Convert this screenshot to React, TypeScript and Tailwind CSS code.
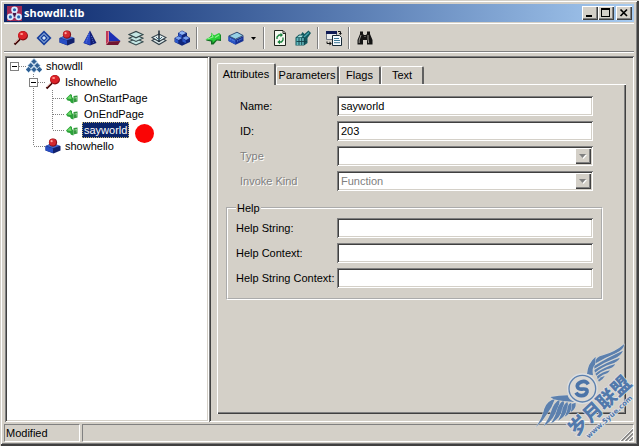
import { ReactNode } from 'react';

const SUNKEN =
  'shadow-[inset_1px_1px_0_#808080,inset_-1px_-1px_0_#ffffff,inset_2px_2px_0_#404040,inset_-2px_-2px_0_#d4d0c8]';
const RAISED =
  'bg-[#d4d0c8] shadow-[inset_1px_1px_0_#ffffff,inset_-1px_-1px_0_#404040,inset_-2px_-2px_0_#808080]';

function Icon({ children, className = 'w-4 h-4' }: { children: ReactNode; className?: string }) {
  return (
    <svg viewBox="0 0 16 16" className={`${className} shrink-0`} aria-hidden="true">
      {children}
    </svg>
  );
}

function PinIcon() {
  return (
    <Icon>
      <path d="M1.5 14.5 L7 9" stroke="#400808" strokeWidth="2.2" />
      <path d="M2 13 L6.5 8.5" stroke="#e0a098" strokeWidth="0.9" />
      <ellipse cx="10" cy="5.8" rx="5" ry="4.7" fill="#8c0d12" />
      <ellipse cx="9.6" cy="5.2" rx="4.4" ry="4" fill="#dc2228" />
      <ellipse cx="8.6" cy="4" rx="1.5" ry="1" fill="#ff9a90" />
    </Icon>
  );
}

function DiamondIcon() {
  return (
    <Icon>
      <path d="M8 0.5 L15.5 8 L8 15.5 L0.5 8 Z" fill="#183f9c" />
      <path d="M8 3 L13 8 L8 13 L3 8 Z" fill="#b5d4f0" />
      <path d="M8 4 L12 8 L8 12 L4 8 Z" fill="#183f9c" />
      <path d="M8 6 L10 8 L8 10 L6 8 Z" fill="#d5e8fa" />
    </Icon>
  );
}

function CoclassIcon() {
  return (
    <Icon>
      <path d="M0.5 8 L5 6 L15.5 8 V12.5 L8.5 15.5 L0.5 12.5 Z" fill="#12226e" />
      <path d="M0.5 8 L8 10.5 V15 L0.5 12.5 Z" fill="#284ec4" />
      <path d="M1 7.7 L8 5 L15 7.7 L8 10.3 Z" fill="#4267cc" />
      <circle cx="8" cy="4.6" r="4.1" fill="#851018" />
      <circle cx="7.6" cy="4.2" r="3.4" fill="#d32a30" />
      <circle cx="6.6" cy="3.2" r="1.1" fill="#ffaaa4" />
    </Icon>
  );
}

function ConeIcon() {
  return (
    <Icon>
      <path d="M8 0.5 L14.5 13 L8 15.5 L1.5 13 Z" fill="#101c74" />
      <path d="M8 1 L8.5 15 L1.5 13 Z" fill="#2947c6" />
      <path d="M7 4 L4 13 M9.5 6 L11.5 13" stroke="#6f8bea" strokeWidth="0.8" strokeDasharray="1 1" />
    </Icon>
  );
}

function WedgeIcon() {
  return (
    <Icon>
      <path d="M1 1 L5 1 L5 11 L1 15 Z" fill="#c03a58" />
      <path d="M4 1 L15.5 11 L4 11.5 Z" fill="#1c2fb4" />
      <path d="M1 15 L4 11.5 L15.5 11 L13 15 Z" fill="#711531" />
      <path d="M3.5 1.5 V11.5 L1 14.5" fill="none" stroke="#f0a0b0" strokeWidth="0.7" />
    </Icon>
  );
}

function LayersIcon() {
  return (
    <Icon>
      {[11.8, 8.2, 4.6].map((y) => (
        <path
          key={y}
          d={`M1 ${y} L8 ${y - 3.2} L15 ${y} L8 ${y + 3.2} Z`}
          fill="#c4e6e3"
          stroke="#34484b"
          strokeWidth="1.1"
        />
      ))}
    </Icon>
  );
}

function ModuleIcon() {
  return (
    <Icon>
      <path d="M1 10.5 L8 7 L15 10.5 L8 14.5 Z" fill="#dceaea" stroke="#33414a" strokeWidth="1.1" />
      <path d="M1 7.5 L8 4 L15 7.5 L8 11.5 Z" fill="#e8f2f2" stroke="#33414a" strokeWidth="1.1" />
      <path d="M8 0.5 V12" stroke="#1c2a36" strokeWidth="1.5" />
      <path d="M5 7 L8 10 L11 7" fill="none" stroke="#406c80" />
    </Icon>
  );
}

function CubesIcon() {
  return (
    <Icon>
      <path d="M8 0.5 L13 3 V6 L16 8 V12 L8 15.8 L0.5 12 V8 L4 6 V3 Z" fill="#10267c" />
      <path d="M8 1 L12 3 L8 5 L4.5 3 Z" fill="#8fb4f4" />
      <path d="M4.5 6.2 L8 8 L4.5 10 L1 8 Z M12 6.2 L15.5 8 L12 10 L8.5 8 Z" fill="#79a1ee" />
      <path d="M4.5 3.5 L7.8 5.3 V7.5 L4.5 6 Z M1 8.6 L4.3 10.5 V13.5 L1 12 Z M8.4 8.6 L11.8 10.5 V13.3 L8.4 11.5 Z" fill="#2c58ca" />
    </Icon>
  );
}

function MethodIcon() {
  return (
    <Icon>
      <path d="M6 3.5 L10 6 L14.5 3.5 L16 5 V11 L12 10.5 L8.5 14.5 L6 14.5 V11.5 L1 10.5 L6 6 Z" fill="#126b22" />
      <path d="M6.5 2.5 L9 5.5 L14 3 L15.3 4.5 V9.5 L11.5 9.5 L7.5 13 V10.5 L0.3 9.5 L6 6.5 Z" fill="#28cf37" />
      <path d="M6.8 4 L8 7 L2.5 9 M10 7.5 L14 5" fill="none" stroke="#8ff08c" strokeWidth="1.1" />
    </Icon>
  );
}

// smaller, softer version used in the tree
function TreeMethodIcon() {
  return (
    <Icon>
      <path d="M2 8.5 L6.5 4 L8 5 V7 L9.5 8.5 V13.5 L7 12.8 L6 11 L3.5 10.5 Z" fill="#2ba139" />
      <path d="M3 8.5 L6.5 5.3 L7.5 9 Z" fill="#6fdc6a" />
      <path d="M9.5 6 L13.5 5.5 V11.5 L9.5 12.5 Z" fill="#35983f" />
      <path d="M10.5 8 L13 7.5 V10.5" fill="none" stroke="#a2dba0" />
    </Icon>
  );
}

function BoxIcon() {
  return (
    <Icon>
      <path d="M0.5 6 L8 9.5 L15.5 6 V11 L7.5 14.8 L0.5 11 Z" fill="#163194" />
      <path d="M0.5 6.5 L7.5 9.7 V14.5 L0.5 11 Z" fill="#2b55c4" />
      <path d="M0.8 6 L9 2.2 L15.2 5.6 L7.5 9.2 Z" fill="#97d0e4" stroke="#21406e" strokeWidth="0.9" />
      <path d="M2 8.7 L7 11.2 M9 11.2 L14.5 8.5" stroke="#7aa4ee" strokeDasharray="1 1" />
    </Icon>
  );
}

function RefreshIcon() {
  return (
    <Icon>
      <path d="M2.5 0.5 H11 L13.5 3 V15.5 H2.5 Z" fill="#f5f8f0" stroke="#20261f" />
      <path d="M11 1 V3.5 H13.5" fill="none" stroke="#20261f" />
      <path d="M5 9 V7 L7 5 H9 M11 7.5 V10 L9.5 12 H7.5" fill="none" stroke="#16803a" strokeWidth="1.3" />
      <path d="M8.5 2.8 L11 5 L8.5 7.2 Z M8 9.8 L5.3 12 L8 14.2 Z" fill="#16803a" />
    </Icon>
  );
}

function RegisterIcon() {
  return (
    <Icon>
      <path d="M0.5 7.5 L4 4.5 H6 L7.5 2 L9.5 4 L13.5 0.5 L16 3 L12.5 8 V13 L9 15.5 H0.5 Z" fill="#11585e" />
      <path d="M1.5 8 H9 V15 H1.5 Z" fill="#63b9bd" />
      <path d="M1.5 11.5 H12 M4 8 V15 M6.7 8 V15 M9.2 7 V15" stroke="#123f48" strokeWidth="0.9" />
      <path d="M2 7.3 L4.5 5.4 H8 L6.5 7.3 Z" fill="#ade3df" />
      <path d="M9 7 L14 2.5" stroke="#4aa6b0" strokeWidth="1.3" />
    </Icon>
  );
}

function CopyWindowIcon() {
  return (
    <Icon>
      <path d="M0.5 1.5 H10.5 V9.5 H0.5 Z" fill="#ebeeee" stroke="#6c7686" />
      <path d="M0 1 H11 V4 H0 Z" fill="#101b55" />
      <path d="M6.5 5.5 H13.5 L15.5 7.5 V15.5 H6.5 Z" fill="#f6fbff" stroke="#182a36" />
      <path d="M8 8.5 H13 M8 10.5 H14 M8 12.7 H14" stroke="#3d7894" />
      <path d="M12 1.5 H14.5 V4 M1 11.5 V13.5 H4" fill="none" stroke="#111" />
      <path d="M12.8 3 H16 L14.4 5 Z M3.5 11.5 L5.8 13.5 L3.5 15.5 Z" fill="#111" />
    </Icon>
  );
}

function FindIcon() {
  return (
    <Icon>
      <path
        d="M3 1.5 H6 V4 L7 5 H9 L10 4 V1.5 H13 V4 L15.5 10 V14.5 H10 V10 H6 V14.5 H0.5 V10 L3 4 Z"
        fill="#151515"
      />
      <path d="M4 5 L2.2 10 V13 M11 5 V9 L11.7 13 M7.5 6.5 H8.5" fill="none" stroke="#bbb7af" strokeWidth="0.8" />
    </Icon>
  );
}

function AppIcon() {
  return (
    <Icon className="w-[15px] h-[15px]">
      <rect width="16" height="16" fill="#a12a54" />
      <path d="M8 4 L3 12 L13 12 Z" fill="#431548" stroke="#e9c5dc" strokeWidth="1.2" />
      {[
        [8, 4],
        [3.6, 11.6],
        [12.4, 11.6],
      ].map(([x, y]) => (
        <g key={x}>
          <circle cx={x} cy={y} r="3.5" fill="#d8edff" />
          <circle cx={x} cy={y} r="1.7" fill="#2764b0" />
        </g>
      ))}
    </Icon>
  );
}

function LibraryIcon() {
  return (
    <Icon>
      {[
        [8, 3.6],
        [4.8, 7.6],
        [11.2, 7.6],
        [2.6, 11.6],
        [8, 11.6],
        [13.4, 11.6],
      ].map(([x, y]) => (
        <path key={`${x}-${y}`} d={`M${x} ${y - 3} l3 3 l-3 3 l-3 -3 Z`} fill="#2f5f93" stroke="#c3dcf1" strokeWidth="0.7" />
      ))}
    </Icon>
  );
}

function ToolButton({ label, children }: { label: string; children: ReactNode }) {
  return (
    <button type="button" aria-label={label} className="flex w-[23px] h-6 items-center justify-center">
      {children}
    </button>
  );
}

function Separator() {
  return (
    <div className="flex w-2 justify-center">
      <div className="w-0.5 h-[22px] border-l border-l-[#808080] border-r border-r-white"></div>
    </div>
  );
}

type Guide = 'blank' | 'minus' | 'root' | 'tee' | 'end' | 'vert';

function GuideCell({ kind }: { kind: Guide }) {
  const line = { stroke: '#808080', strokeDasharray: '1 1' };
  return (
    <svg viewBox="0 0 19 16" className="w-[19px] h-4 shrink-0" aria-hidden="true">
      {kind !== 'blank' && kind !== 'root' && (
        <path d={kind === 'end' ? 'M7.5 0 V8' : 'M7.5 0 V16'} {...line} />
      )}
      {kind !== 'blank' && kind !== 'vert' && <path d="M8 8.5 H19" {...line} />}
      {(kind === 'minus' || kind === 'root') && (
        <>
          <rect x="3.5" y="4.5" width="8" height="8" fill="#fff" stroke="#808080" />
          <path d="M5 8.5 H10" stroke="#000" />
        </>
      )}
    </svg>
  );
}

interface TreeRow {
  name: string;
  guides: Guide[];
  icon: ReactNode;
  selected?: boolean;
}

const treeRows: TreeRow[] = [
  { name: 'showdll', guides: ['root'], icon: <LibraryIcon /> },
  { name: 'Ishowhello', guides: ['blank', 'minus'], icon: <PinIcon /> },
  { name: 'OnStartPage', guides: ['blank', 'vert', 'tee'], icon: <TreeMethodIcon /> },
  { name: 'OnEndPage', guides: ['blank', 'vert', 'tee'], icon: <TreeMethodIcon /> },
  { name: 'sayworld', guides: ['blank', 'vert', 'end'], icon: <TreeMethodIcon />, selected: true },
  { name: 'showhello', guides: ['blank', 'end'], icon: <CoclassIcon /> },
];

function Tree() {
  return (
    <ul role="tree" className={`w-[204px] shrink-0 bg-white p-0.5 ${SUNKEN}`}>
      {treeRows.map((row) => (
        <li key={row.name} role="treeitem" aria-selected={!!row.selected} className="flex h-4 items-center">
          {row.guides.map((kind, i) => (
            <GuideCell key={i} kind={kind} />
          ))}
          {row.icon}
          {row.selected ? (
            <span className="relative ml-0.5 h-4 bg-[#0a246a] px-0.5 leading-4 text-white outline-1 -outline-offset-1 outline-dotted outline-[#c8b878]">
              {row.name}
              <span className="absolute left-full top-0.5 ml-1.5 h-[19px] w-[19px] rounded-full bg-[#fa0505]"></span>
            </span>
          ) : (
            <span className="ml-0.5 px-0.5 leading-4">{row.name}</span>
          )}
        </li>
      ))}
    </ul>
  );
}

function TextRow({ id, label, value = '', labelClass }: { id: string; label: string; value?: string; labelClass: string }) {
  return (
    <div className="flex h-5 items-center">
      <label htmlFor={id} className={`${labelClass} shrink-0 whitespace-nowrap`}>
        {label}
      </label>
      <input id={id} type="text" defaultValue={value} className={`h-5 min-w-0 flex-1 bg-white px-1 outline-none ${SUNKEN}`} />
    </div>
  );
}

function SelectRow({ id, label, value = '' }: { id: string; label: string; value?: string }) {
  return (
    <div className="flex h-5 items-center">
      <label htmlFor={id} className="w-[97px] shrink-0 text-[#808080] [text-shadow:1px_1px_0_#fff]">
        {label}
      </label>
      <div className="relative min-w-0 flex-1">
        <select
          id={id}
          disabled
          defaultValue={value}
          className={`block h-5 w-full appearance-none bg-white px-1 text-[#808080] opacity-100 ${SUNKEN}`}
        >
          <option value={value}>{value}</option>
        </select>
        <span className={`pointer-events-none absolute right-0.5 top-0.5 flex h-4 w-4 items-center justify-center ${RAISED}`}>
          <svg viewBox="0 0 8 5" className="h-[5px] w-2" aria-hidden="true">
            <path d="M1 1 H8 L4.5 5 Z" fill="#fff" />
            <path d="M0 0 H7 L3.5 4 Z" fill="#808080" />
          </svg>
        </span>
      </div>
    </div>
  );
}

const tabs = [
  { name: 'Parameters', width: 'w-[63px]' },
  { name: 'Flags', width: 'w-[42px]' },
  { name: 'Text', width: 'w-[43px]' },
];

const TAB_EDGE = 'rounded-t-[2px] border-l border-t border-r-2 border-l-white border-t-white border-r-[#606060]';

function Properties() {
  return (
    <div className={`flex min-w-0 flex-1 flex-col px-2 pb-2 pt-[7px] ${SUNKEN}`}>
      <div role="tablist" className="flex items-end">
        <button
          type="button"
          role="tab"
          aria-selected="true"
          className={`relative -mb-px h-[22px] w-[59px] bg-[#d4d0c8] ${TAB_EDGE}`}
        >
          Attributes
        </button>
        {tabs.map((tab) => (
          <button key={tab.name} type="button" role="tab" aria-selected="false" className={`h-[18px] ${tab.width} ${TAB_EDGE}`}>
            {tab.name}
          </button>
        ))}
      </div>

      <div
        role="tabpanel"
        className="flex-1 pb-3 pl-[9px] pr-[23px] pt-3 shadow-[inset_1px_1px_0_#ffffff,inset_-1px_-1px_0_#404040,inset_-2px_-2px_0_#808080]"
      >
        <div className="space-y-[5px] pl-3.5 pr-2.5">
          <TextRow id="name" label="Name:" value="sayworld" labelClass="w-[97px]" />
          <TextRow id="id" label="ID:" value="203" labelClass="w-[97px]" />
          <SelectRow id="type" label="Type" />
          <SelectRow id="kind" label="Invoke Kind" value="Function" />
        </div>

        <fieldset className="mt-[11px] border-2 border-white px-2 pb-2.5 [border-style:groove]">
          <legend className="px-px leading-3">Help</legend>
          <div className="space-y-[5px] pt-1">
            <TextRow id="help-string" label="Help String:" labelClass="w-[101px]" />
            <TextRow id="help-context" label="Help Context:" labelClass="w-[101px]" />
            <TextRow id="help-string-context" label="Help String Context:" labelClass="w-[101px]" />
          </div>
        </fieldset>
      </div>
    </div>
  );
}

const feathers = [
  // right wing, top feather first
  'M226 84 Q230 62 252 58 Q288 48 316 24 Q314 42 290 52 Q256 66 226 84 Z',
  'M226 90 Q262 66 312 44 Q306 60 284 68 Q252 80 226 98 Z',
  'M226 102 Q258 80 303 65 Q296 78 276 84 Q250 92 228 110 Z',
  'M229 113 Q254 94 289 84 Q282 97 264 100 Q246 106 232 119 Z',
  'M234 121 Q250 108 273 103 Q266 114 252 116 Q242 122 236 130 Z',
  'M237 132 Q246 122 258 119 Q252 130 240 137 Z',
  'M204 115 Q206 82 230 62 L228 86 Q218 94 222 118 Z',
  // left wing, outer feather first
  'M50 274 Q70 246 76 218 Q84 194 108 188 Q100 212 84 234 Q70 258 50 274 Z',
  'M74 270 Q92 244 98 222 Q106 200 122 190 Q122 210 108 234 Q96 258 74 270 Z',
  'M96 262 Q110 240 114 222 Q120 202 134 193 Q138 210 126 232 Q114 254 96 262 Z',
  'M117 254 Q130 232 131 216 Q136 202 145 197 Q150 210 142 228 Q134 246 117 254 Z',
  'M137 242 Q146 224 146 212 Q149 202 156 200 Q162 210 156 222 Q150 236 137 242 Z',
  'M155 229 Q160 216 158 204 L170 200 Q172 218 155 229 Z',
  'M94 183 Q120 178 146 178 Q148 192 168 198 Q130 196 104 190 Z',
];

function Watermark() {
  return (
    <svg viewBox="0 0 360 330" className="pointer-events-none absolute bottom-0 right-0 h-[110px] w-[120px]" aria-hidden="true">
      {feathers.map((d) => (
        <path key={d} d={d} fill="#5c80ae" stroke="#dcdfe2" strokeWidth="2" paintOrder="stroke" />
      ))}
      <circle cx="190" cy="158" r="46" fill="#dcdfe2" />
      <circle cx="190" cy="158" r="40" fill="#dad8d4" stroke="#5c80ae" strokeWidth="4" />
      <path
        d="M208 145 Q200 132 186 138 Q172 144 176 154 Q180 161 192 159 Q206 158 204 168 Q200 180 186 179 Q176 179 171 170"
        fill="none"
        stroke="#4b74a8"
        strokeWidth="11"
      />
      <g fill="#5279ab" stroke="#e2e4e6" strokeWidth="4" paintOrder="stroke">
        <text
          transform="translate(171 303) rotate(-43)"
          className="font-['Noto_Sans_CJK_SC',sans-serif] text-[58px] font-black"
        >
          岁月联盟
        </text>
        <text
          transform="translate(209 308) rotate(-42)"
          className="font-['DejaVu_Sans',sans-serif] text-[21px] font-bold"
        >
          www.5yue.com
        </text>
      </g>
    </svg>
  );
}

export default function App() {
  return (
    <div className="relative flex min-h-screen flex-col overflow-hidden bg-[#d4d0c8] pb-1 pl-1 pr-[5px] pt-1 font-['Liberation_Sans',Arial,sans-serif] text-[11px] text-black shadow-[inset_1px_1px_0_#d4d0c8,inset_-2px_-2px_0_#404040,inset_2px_2px_0_#ffffff,inset_-3px_-3px_0_#808080]">
      <header className="flex h-[18px] items-center bg-linear-to-r from-[#0a246a] to-[#a6caf0] pl-[3px] pr-0.5">
        <AppIcon />
        <h1 className="ml-0.5 flex-1 font-['Noto_Sans',sans-serif] text-[11px] font-bold leading-4 text-white">
          showdll.tlb
        </h1>
        <button type="button" aria-label="Minimize" className={`h-3.5 w-4 ${RAISED}`}>
          <svg viewBox="0 0 16 14" className="h-3.5 w-4">
            <path d="M4 9 H10 V11 H4 Z" />
          </svg>
        </button>
        <button type="button" aria-label="Maximize" className={`h-3.5 w-4 ${RAISED}`}>
          <svg viewBox="0 0 16 14" className="h-3.5 w-4">
            <path d="M3 2 H12 V11 H3 Z M4 4 V10 H11 V4 Z" fillRule="evenodd" />
          </svg>
        </button>
        <button type="button" aria-label="Close" className={`ml-0.5 h-3.5 w-4 ${RAISED}`}>
          <svg viewBox="0 0 16 14" className="h-3.5 w-4">
            <path d="M4.5 3.5 L11 10 M11 3.5 L4.5 10" stroke="#000" strokeWidth="1.7" />
          </svg>
        </button>
      </header>

      <div role="toolbar" className="mt-px flex h-[30px] items-center border-b border-t border-b-white border-t-white pl-[5px] shadow-[inset_0_-1px_0_#808080]">
        <ToolButton label="New interface"><PinIcon /></ToolButton>
        <ToolButton label="New dispinterface"><DiamondIcon /></ToolButton>
        <ToolButton label="New coclass"><CoclassIcon /></ToolButton>
        <ToolButton label="New enumeration"><ConeIcon /></ToolButton>
        <ToolButton label="New alias"><WedgeIcon /></ToolButton>
        <ToolButton label="New record"><LayersIcon /></ToolButton>
        <ToolButton label="New union"><ModuleIcon /></ToolButton>
        <ToolButton label="New module"><CubesIcon /></ToolButton>
        <Separator />
        <ToolButton label="New method"><MethodIcon /></ToolButton>
        <ToolButton label="New property"><BoxIcon /></ToolButton>
        <button type="button" aria-label="Property options" className="flex h-6 w-[13px] items-center justify-center">
          <svg viewBox="0 0 5 3" className="h-[3px] w-[5px]">
            <path d="M0 0 H5 L2.5 3 Z" />
          </svg>
        </button>
        <Separator />
        <ToolButton label="Refresh"><RefreshIcon /></ToolButton>
        <ToolButton label="Register"><RegisterIcon /></ToolButton>
        <Separator />
        <ToolButton label="Export"><CopyWindowIcon /></ToolButton>
        <Separator />
        <ToolButton label="Find"><FindIcon /></ToolButton>
      </div>

      <main className="mt-[3px] flex flex-1 pl-px">
        <Tree />
        <Properties />
      </main>

      <footer className="mt-0.5 flex h-[18px] gap-0.5">
        <div className="w-[76px] border border-b-white border-l-[#808080] border-r-white border-t-[#808080] pl-px leading-4">
          Modified
        </div>
        <div className="flex flex-1 items-end justify-end border border-b-white border-l-[#808080] border-r-white border-t-[#808080]">
          <svg viewBox="0 0 13 13" className="h-[13px] w-[13px]" aria-hidden="true">
            <path d="M0 13 L13 0 M4 13 L13 4 M8 13 L13 8" stroke="#fff" />
            <path d="M1.5 13 L13 1.5 M5.5 13 L13 5.5 M9.5 13 L13 9.5" stroke="#808080" strokeWidth="1.5" />
          </svg>
        </div>
      </footer>

      <Watermark />
    </div>
  );
}
